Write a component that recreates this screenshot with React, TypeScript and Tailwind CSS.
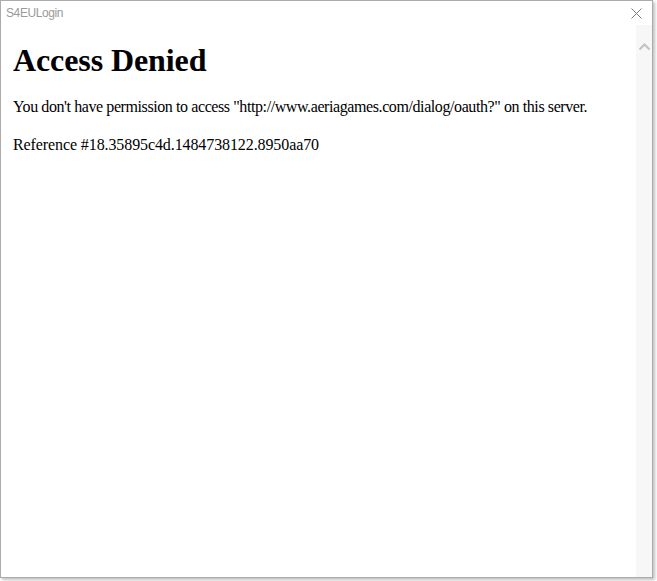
export default function App() {
  return (
    <div className="w-[657px] h-[581px] bg-white">
      <div className="w-[653px] h-[578px] border border-[#ababab] bg-white flex flex-col shadow-[2px_2px_3px_rgba(0,0,0,0.25)]">
        {/* title bar */}
        <div className="h-[24px] flex items-center justify-between pl-[5px] pr-[10px] shrink-0">
          <span className="text-[12px] text-[#9a9a9a] font-['Liberation_Sans',sans-serif] leading-none tracking-[-0.4px]">S4EULogin</span>
          <svg width="11" height="11" viewBox="0 0 11 11" className="text-[#7a7a7a]">
            <path d="M0.5 0.5 L10.5 10.5 M10.5 0.5 L0.5 10.5" stroke="currentColor" strokeWidth="1" fill="none" />
          </svg>
        </div>
        {/* content */}
        <div className="flex flex-1 min-h-0">
          <div className="flex-1 px-[12px] font-['Liberation_Serif',serif] text-black">
            <h1 className="text-[32px] font-bold mt-[17px] mb-[19px] leading-[37px] tracking-[-0.1px]">Access Denied</h1>
            <p className="text-[16px] leading-[18px] mb-[16px] tracking-[-0.41px]">
              You don't have permission to access "http://www.aeriagames.com/dialog/oauth?" on this server.
            </p>
            <p className="text-[16px] leading-[18px] mt-[20px] tracking-[-0.1px]">Reference #18.35895c4d.1484738122.8950aa70</p>
          </div>
          <div className="w-[16px] bg-[#f7f7f7] flex flex-col items-center pt-[18px]">
            <svg width="11" height="7" viewBox="0 0 11 7">
              <path d="M0.5 6.5 L5.5 1.5 L10.5 6.5" stroke="#c2c2c2" strokeWidth="2" fill="none" />
            </svg>
          </div>
        </div>
      </div>
    </div>
  );
}
